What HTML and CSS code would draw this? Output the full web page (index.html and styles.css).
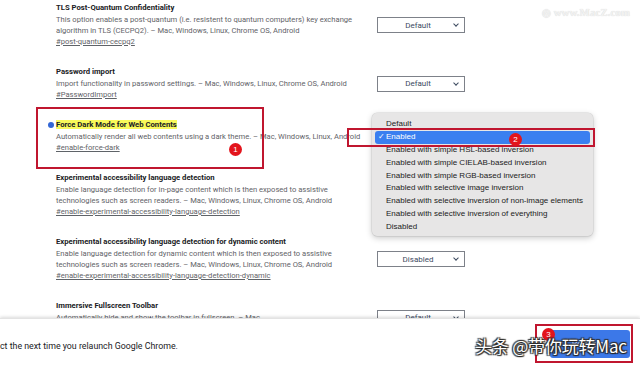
FILE: index.html
```html
<!DOCTYPE html>
<html>
<head>
<meta charset="utf-8">
<link rel="stylesheet" href="styles.css">
</head>
<body>
<div class="page">
  <main class="list">
    <section class="row">
      <div class="info">
        <div class="title">TLS Post-Quantum Confidentiality</div>
        <p class="desc">This option enables a post-quantum (i.e. resistent to quantum computers) key exchange algorithm in TLS (CECPQ2). – Mac, Windows, Linux, Chrome OS, Android</p>
        <a class="link">#post-quantum-cecpq2</a>
      </div>
      <div class="select">Default<span class="chev"></span></div>
    </section>
    <section class="row">
      <div class="info">
        <div class="title">Password import</div>
        <p class="desc">Import functionality in password settings. – Mac, Windows, Linux, Chrome OS, Android</p>
        <a class="link">#PasswordImport</a>
      </div>
      <div class="select">Default<span class="chev"></span></div>
    </section>
    <section class="row">
      <div class="info">
        <div class="title"><span class="dot"></span><span class="hl">Force Dark Mode for Web Contents</span></div>
        <p class="desc">Automatically render all web contents using a dark theme. – Mac, Windows, Linux, Android</p>
        <a class="link">#enable-force-dark</a>
      </div>
      <div class="select">Enabled<span class="chev"></span></div>
    </section>
    <section class="row">
      <div class="info">
        <div class="title">Experimental accessibility language detection</div>
        <p class="desc">Enable language detection for in-page content which is then exposed to assistive technologies such as screen readers. – Mac, Windows, Linux, Chrome OS, Android</p>
        <a class="link">#enable-experimental-accessibility-language-detection</a>
      </div>
      <div class="select">Default<span class="chev"></span></div>
    </section>
    <section class="row">
      <div class="info">
        <div class="title">Experimental accessibility language detection for dynamic content</div>
        <p class="desc">Enable language detection for dynamic content which is then exposed to assistive technologies such as screen readers. – Mac, Windows, Linux, Chrome OS, Android</p>
        <a class="link">#enable-experimental-accessibility-language-detection-dynamic</a>
      </div>
      <div class="select">Disabled<span class="chev"></span></div>
    </section>
    <section class="row">
      <div class="info">
        <div class="title">Immersive Fullscreen Toolbar</div>
        <p class="desc">Automatically hide and show the toolbar in fullscreen. – Mac</p>
        <a class="link">#enable-immersive-fullscreen-toolbar</a>
      </div>
      <div class="select">Default<span class="chev"></span></div>
    </section>
  </main>
  <footer class="bar">
    <span class="notice">ct the next time you relaunch Google Chrome.</span>
    <button class="relaunch">Relaunch</button>
  </footer>

  <ul class="menu">
    <li>Default</li>
    <li class="on"><span class="check">✓</span>Enabled</li>
    <li>Enabled with simple HSL-based inversion</li>
    <li>Enabled with simple CIELAB-based inversion</li>
    <li>Enabled with simple RGB-based inversion</li>
    <li>Enabled with selective image inversion</li>
    <li>Enabled with selective inversion of non-image elements</li>
    <li>Enabled with selective inversion of everything</li>
    <li>Disabled</li>
  </ul>

  <div class="box box1"></div>
  <div class="box box2"></div>
  <div class="box box3"></div>
  <div class="badge b1">1</div>
  <div class="badge b2">2</div>
  <div class="badge b3">3</div>

  <div class="wm-top"><span class="wm-logo">◎</span> www.MacZ.com</div>
  <div class="wm-bottom">头条 @带你玩转Mac</div>
</div>
</body>
</html>
```
FILE: styles.css
```css
* { box-sizing: border-box; }
html, body { margin: 0; padding: 0; background: #fff; }
body { font-family: Roboto, "Liberation Sans", sans-serif; }

.page {
  position: relative;
  width: 640px;
  height: 366px;
  overflow: hidden;
  display: flex;
  flex-direction: column;
}

.list {
  height: 318px;
  overflow: hidden;
  padding: 2px 0 0 56px;
  display: flex;
  flex-direction: column;
  gap: 18px;
}

.row {
  display: flex;
  align-items: center;
  flex-shrink: 0;
}

.info {
  width: 314px;
  flex-shrink: 0;
  display: flex;
  flex-direction: column;
}

.title {
  position: relative;
  font-size: 7.7px;
  font-weight: 700;
  color: #202124;
  line-height: 12px;
  white-space: nowrap;
}
.hl { background: #f9f95a; }
.dot {
  position: absolute;
  left: -8px;
  top: 3px;
  width: 6px;
  height: 6px;
  border-radius: 50%;
  background: #3367d6;
}

.desc {
  margin: 0;
  font-size: 7.6px;
  line-height: 11px;
  color: #5f6368;
}

.link {
  font-size: 7.6px;
  line-height: 12px;
  color: #5f6368;
  text-decoration: underline;
  align-self: flex-start;
}

.select {
  position: relative;
  margin-left: 7px;
  width: 88px;
  height: 16px;
  flex-shrink: 0;
  border: 1px solid #7d8189;
  background: #fff;
  font-size: 8px;
  color: #3c4a5f;
  display: flex;
  align-items: center;
  justify-content: center;
  padding-right: 6px;
}
.chev {
  position: absolute;
  right: 6px;
  top: 4px;
  width: 4px;
  height: 4px;
  border-right: 1.3px solid #3c4a5f;
  border-bottom: 1.3px solid #3c4a5f;
  transform: rotate(45deg);
}

.bar {
  height: 48px;
  flex-shrink: 0;
  background: #fff;
  box-shadow: 0 -1px 3px rgba(0,0,0,0.15);
  border-top: 1px solid #e3e3e3;
  display: flex;
  align-items: center;
  justify-content: space-between;
  padding: 0 10px 0 0;
  position: relative;
  z-index: 1;
}
.notice {
  font-size: 8.8px;
  color: #202124;
  margin-top: 6px;
}
.relaunch {
  width: 80px;
  height: 28px;
  margin-top: 2px;
  border: none;
  border-radius: 3px;
  background: #3c78e8;
  color: #fff;
  font-family: Roboto, sans-serif;
  font-size: 9px;
}

.menu {
  position: absolute;
  left: 372px;
  top: 113px;
  width: 221px;
  height: 123px;
  margin: 0;
  padding: 5px 3px 3px;
  list-style: none;
  background: #e7e6e6;
  border-radius: 5px;
  box-shadow: 0 2px 6px rgba(0,0,0,0.22), 0 0 0 0.5px rgba(0,0,0,0.12);
  font-family: "Liberation Sans", Roboto, sans-serif;
  font-size: 8px;
  color: #222;
  z-index: 2;
}
.menu li {
  position: relative;
  height: 12.9px;
  line-height: 12.9px;
  padding-left: 11px;
  border-radius: 3px;
  white-space: nowrap;
}
.menu li.on {
  background: #3a7ff0;
  color: #fff;
}
.check {
  position: absolute;
  left: 3px;
  top: 0;
}

.box {
  position: absolute;
  border: 2px solid #c0162f;
  z-index: 3;
}
.box1 { left: 36px; top: 107px; width: 228px; height: 62px; }
.box2 { left: 347px; top: 128px; width: 248px; height: 19px; }
.box3 { left: 535px; top: 324px; width: 98px; height: 39px; }

.badge {
  position: absolute;
  width: 13px;
  height: 13px;
  border-radius: 50%;
  background: #e3141c;
  color: #fff;
  font-size: 8px;
  line-height: 13px;
  text-align: center;
  font-family: "Liberation Sans", sans-serif;
  z-index: 4;
}
.b1 { left: 229px; top: 143px; }
.b2 { left: 509px; top: 133px; }
.b3 { left: 542px; top: 328px; }

.wm-top {
  position: absolute;
  right: 10px;
  top: 6px;
  font-family: "Liberation Serif", serif;
  font-weight: 700;
  font-size: 11px;
  color: #f2f2f2;
  text-shadow: 0 0 1px #cfcfcf;
  z-index: 4;
}
.wm-logo { font-size: 10px; }

.wm-bottom {
  position: absolute;
  left: 475px;
  top: 336px;
  font-family: "Noto Sans CJK SC", "Liberation Sans", sans-serif;
  font-size: 17px;
  line-height: 20px;
  color: #fff;
  letter-spacing: -0.2px;
  text-shadow: 0 0 1px #222, 1px 1px 1px #222, -1px -1px 1px #333, 1px -1px 1px #333, -1px 1px 1px #333;
  z-index: 5;
}
```
